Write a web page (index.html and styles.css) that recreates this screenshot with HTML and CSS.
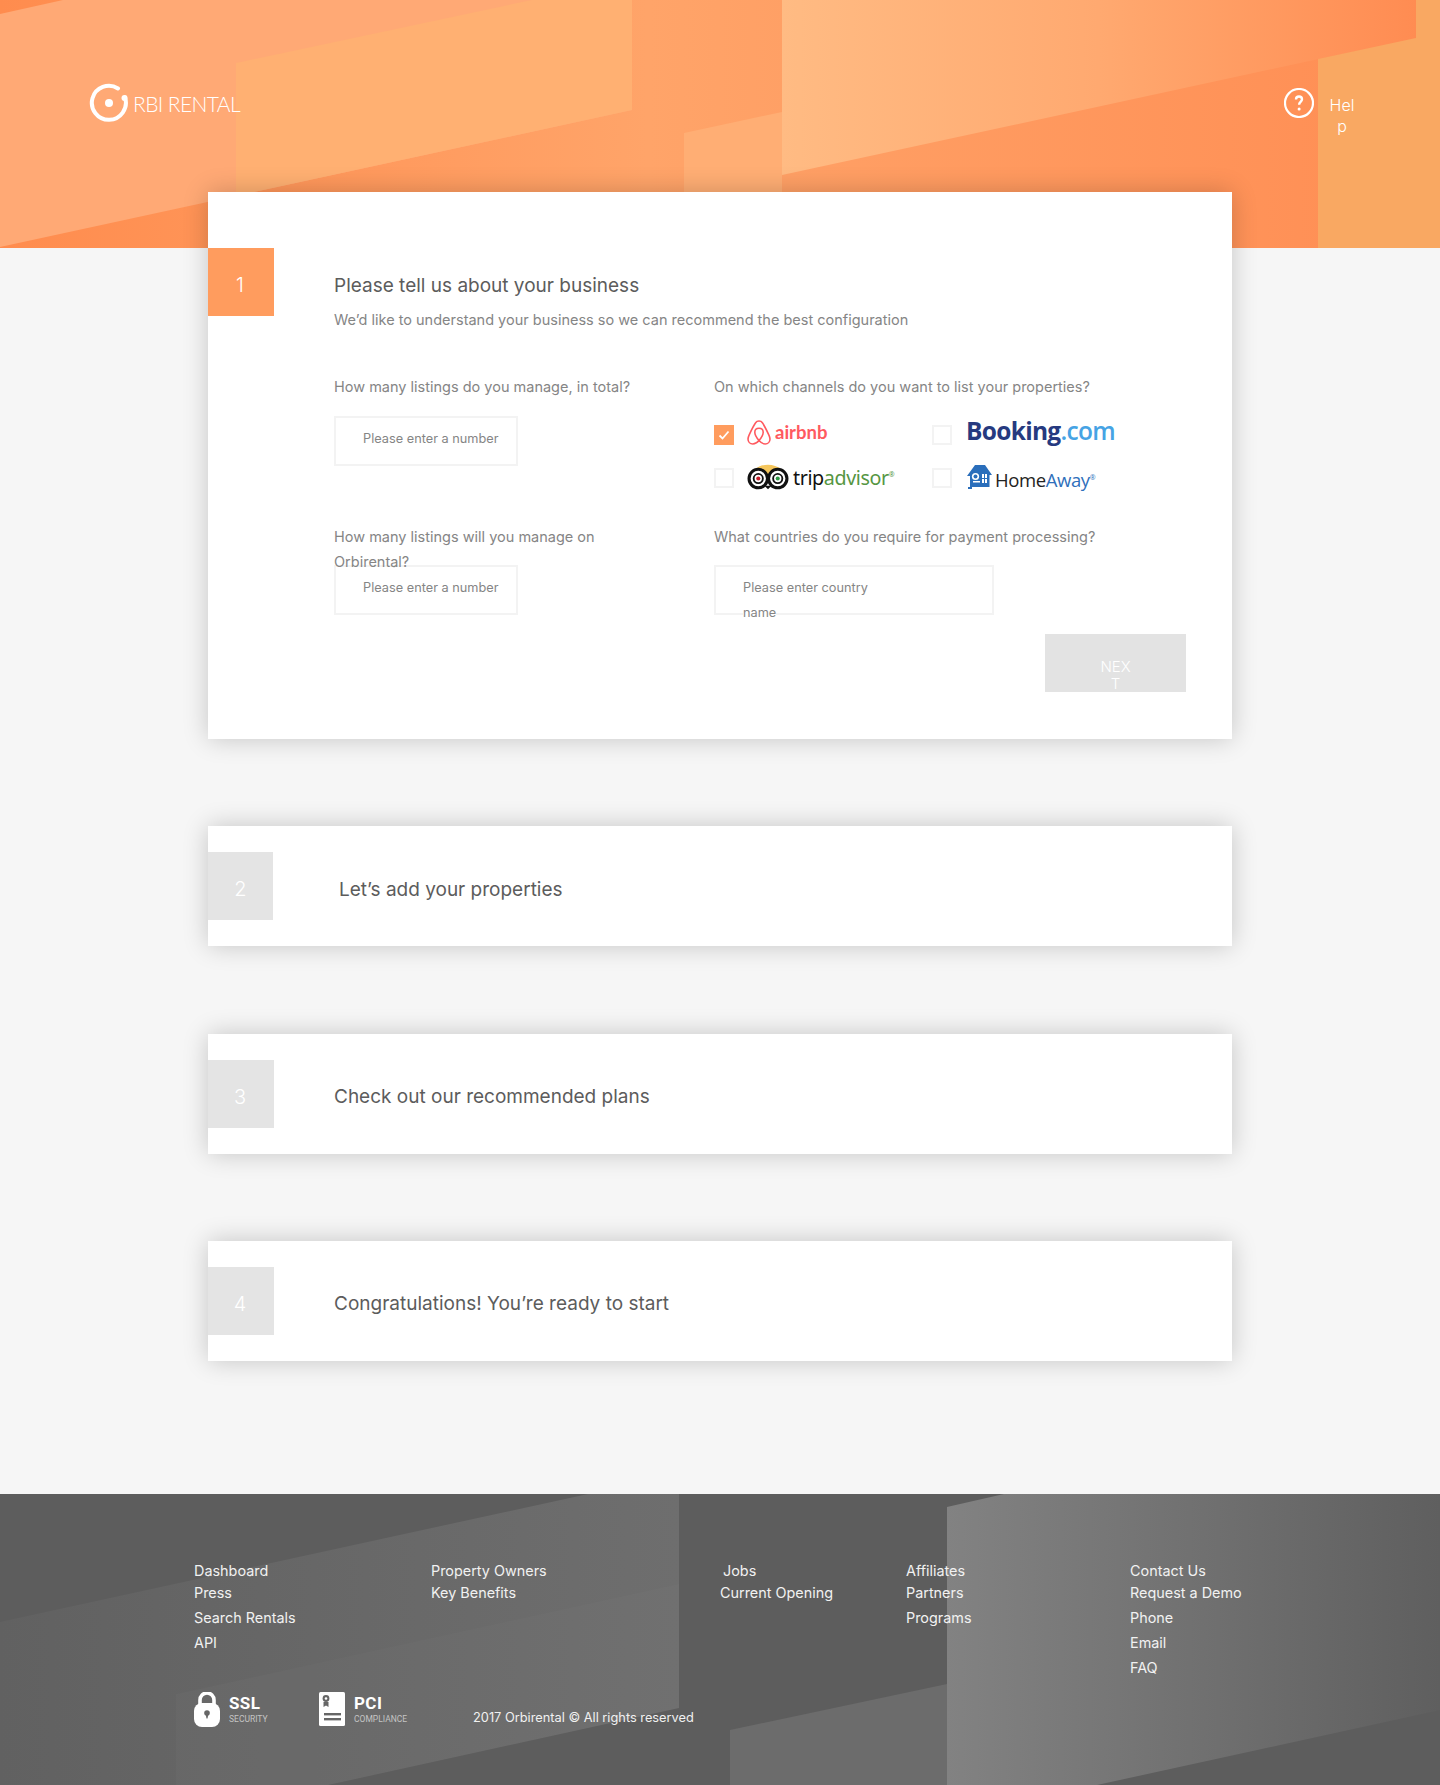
FILE: index.html
```html
<!DOCTYPE html>
<html lang="en">
<head>
    <meta charset="UTF-8">
    <meta name="viewport" content="width=device-width, initial-scale=1.0">
    <title>Orbirental - Get started</title>
    <link rel="stylesheet" href="styles.css">
</head>
<body>
    <header class="top">
        <svg class="top-bg" viewBox="0 0 1440 248" preserveAspectRatio="none" aria-hidden="true">
            <defs>
                <linearGradient id="topBase" x1="0" x2="1" y1="0" y2="0">
                    <stop offset="0" stop-color="#ff8c4e"/>
                    <stop offset=".45" stop-color="#ffa469"/>
                    <stop offset=".95" stop-color="#ff8f55"/>
                </linearGradient>
                <linearGradient id="topBig" x1="0" x2="1" y1="0" y2="0">
                    <stop offset="0" stop-color="#ffbb83"/>
                    <stop offset=".5" stop-color="#ffa970"/>
                    <stop offset="1" stop-color="#ff8c52"/>
                </linearGradient>
            </defs>
            <rect width="1440" height="248" fill="url(#topBase)"/>
            <polygon points="0,14 63,0 632,0 632,110 0,247" fill="#ffa975"/>
            <polygon points="236,63 532,0 632,0 632,110 236,196" fill="#ffb072"/>
            <polygon points="684,133 782,112 782,248 684,248" fill="#ffae74"/>
            <polygon points="782,0 1416,0 1416,38 782,175" fill="url(#topBig)"/>
            <polygon points="1318,59 1416,38 1416,0 1440,0 1440,248 1318,248" fill="#f9a862"/>
        </svg>
        <a class="logo">
            <svg width="40" height="40" viewBox="0 0 40 40" aria-hidden="true">
                <path d="M36 14.500A17 17 0 1 1 29 5.500" fill="none" stroke="#fff" stroke-width="4" stroke-linecap="round"/>
                <circle cx="35.500" cy="15" r="3" fill="#fff"/>
                <circle cx="20" cy="20" r="4" fill="#fff"/>
            </svg>
            <span class="logo-text">RBI RENTAL</span>
        </a>
        <a class="help">
            <svg width="30" height="30" viewBox="0 0 30 30" aria-hidden="true">
                <circle cx="15" cy="15" r="14" fill="none" stroke="#fff" stroke-width="2.200"/>
                <path d="M12 11.500c0-1.900 1.300-3 3-3s3 1.100 3 2.800c0 2.600-2.900 2.700-2.900 5.500" fill="none" stroke="#fff" stroke-width="2.400"/>
                <circle cx="15.100" cy="21" r="1.500" fill="#fff"/>
            </svg>
            <span class="help-text">Help</span>
        </a>
    </header>

    <main class="steps">
        <section class="card card-open">
            <div class="num num-on">1</div>
            <div class="card-body">
                <h2 class="title">Please tell us about your business</h2>
                <p class="sub">We’d like to understand your business so we can recommend the best configuration</p>
                <div class="form-grid">
                    <div class="field">
                        <div class="label">How many listings do you manage, in total?</div>
                        <div class="input input-num">Please enter a number</div>
                    </div>
                    <div class="field">
                        <div class="label">On which channels do you want to list your properties?</div>
                        <div class="channels">
                            <div class="channel">
                                <span class="check check-on">
                                    <svg width="12" height="12" viewBox="0 0 12 12" aria-hidden="true"><path d="M1.500 6.500l3 3 6-7" fill="none" stroke="#fff" stroke-width="1.800"/></svg>
                                </span>
                                <span class="brand airbnb">
                                    <svg width="24" height="25" viewBox="0 0 24 25" aria-hidden="true">
                                        <path d="M12 20.500c-2.200 2.600-4.300 3.500-6.200 3.500C3 24 1 21.700 1 19c0-1.300.5-2.700 1.200-4.200C4 11 6.500 5.800 8.600 2.800 9.400 1.600 10.500 1 12 1s2.600.6 3.400 1.800c2.100 3 4.600 8.200 6.400 12 .7 1.500 1.200 2.900 1.200 4.200 0 2.700-2 5-4.800 5-1.900 0-4-.9-6.200-3.500z" fill="none" stroke="#ff5a5f" stroke-width="1.600"/>
                                        <path d="M12 20.500c-2.600-3-4.200-6-4.200-8.300 0-2.400 1.800-3.900 4.200-3.900s4.200 1.500 4.200 3.900c0 2.300-1.600 5.300-4.200 8.300z" fill="none" stroke="#ff5a5f" stroke-width="1.600"/>
                                    </svg>
                                    airbnb
                                </span>
                            </div>
                            <div class="channel">
                                <span class="check"></span>
                                <span class="brand booking">Booking<b>.com</b></span>
                            </div>
                            <div class="channel">
                                <span class="check"></span>
                                <span class="brand trip">
                                    <svg width="42" height="26" viewBox="0 0 41 25" aria-hidden="true">
                                        <path d="M8 5C14-1 27-1 33 5L20.500 13z" fill="#f5c65c"/>
                                        <circle cx="11" cy="14" r="9" fill="#fff" stroke="#111" stroke-width="3"/>
                                        <circle cx="30" cy="14" r="9" fill="#fff" stroke="#111" stroke-width="3"/>
                                        <circle cx="11" cy="14" r="4.500" fill="#fff" stroke="#111" stroke-width="1.800"/>
                                        <circle cx="30" cy="14" r="4.500" fill="#fff" stroke="#111" stroke-width="1.800"/>
                                        <circle cx="11" cy="14" r="2" fill="#c8202c"/>
                                        <circle cx="30" cy="14" r="2" fill="#2f9a46"/>
                                        <path d="M17 21l3.500 3.500L24 21z" fill="#111"/>
                                    </svg>
                                    <span>trip<i>advisor</i><sup>®</sup></span>
                                </span>
                            </div>
                            <div class="channel">
                                <span class="check"></span>
                                <span class="brand home">
                                    <svg width="26" height="24" viewBox="0 0 26 24" aria-hidden="true">
                                        <path d="M0 11L8 0h10l7 10h-2.500v12H5v2H1v-2h2V11z" fill="#2a6ebb"/>
                                        <circle cx="8.500" cy="11.500" r="3.600" fill="#fff"/>
                                        <circle cx="8.500" cy="11.500" r="2" fill="#2a6ebb"/>
                                        <rect x="6" y="16" width="7" height="1.500" fill="#fff"/>
                                        <path d="M15 9h5v9h-5z" fill="#fff"/>
                                        <path d="M17 9h1v9h-1zM15 13h5v1h-5z" fill="#2a6ebb"/>
                                    </svg>
                                    <span class="home-name">Home<i>Away</i><sup>®</sup></span>
                                </span>
                            </div>
                        </div>
                    </div>
                    <div class="field">
                        <div class="label label-low">How many listings will you manage on Orbirental?</div>
                        <div class="input input-num">Please enter a number</div>
                    </div>
                    <div class="field">
                        <div class="label label-low">What countries do you require for payment processing?</div>
                        <div class="input input-country"><span>Please enter country name</span></div>
                    </div>
                </div>
                <div class="actions">
                    <button class="next" type="button">NEXT</button>
                </div>
            </div>
        </section>

        <section class="card card-two">
            <div class="num num-two">2</div>
            <h2 class="title title-shut title-two">Let’s add your properties</h2>
        </section>
        <section class="card">
            <div class="num">3</div>
            <h2 class="title title-shut">Check out our recommended plans</h2>
        </section>
        <section class="card">
            <div class="num">4</div>
            <h2 class="title title-shut">Congratulations! You’re ready to start</h2>
        </section>
    </main>

    <footer class="foot">
        <svg class="foot-bg" viewBox="0 0 1440 291" preserveAspectRatio="none" aria-hidden="true">
            <defs>
                <linearGradient id="footBig" x1="0" x2="1" y1="0" y2="0">
                    <stop offset="0" stop-color="#828282"/>
                    <stop offset=".55" stop-color="#6f6f6f"/>
                    <stop offset="1" stop-color="#5f5f5f"/>
                </linearGradient>
                <linearGradient id="footLeft" x1="0" x2="1" y1="0" y2="0">
                    <stop offset="0" stop-color="#616161"/>
                    <stop offset="1" stop-color="#6e6e6e"/>
                </linearGradient>
            </defs>
            <rect width="1440" height="291" fill="#5d5d5d"/>
            <polygon points="0,128 588,0 679,0 679,214 328,291 0,291" fill="url(#footLeft)"/>
            <polygon points="176,200 679,90 679,214 328,291 176,291" fill="#fff" fill-opacity=".02"/>
            <polygon points="730,236 947,190 947,291 730,291" fill="#6c6c6c"/>
            <polygon points="947,13 1004,0 1440,0 1440,216 1097,291 947,291" fill="url(#footBig)"/>
        </svg>
        <div class="foot-cols">
            <ul class="foot-col col-a">
                <li>Dashboard</li>
                <li>Press</li>
                <li>Search Rentals</li>
                <li>API</li>
            </ul>
            <ul class="foot-col col-b">
                <li>Property Owners</li>
                <li>Key Benefits</li>
            </ul>
            <ul class="foot-col col-c">
                <li class="shift">Jobs</li>
                <li>Current Opening</li>
            </ul>
            <ul class="foot-col col-d">
                <li>Affiliates</li>
                <li>Partners</li>
                <li>Programs</li>
            </ul>
            <ul class="foot-col col-e">
                <li>Contact Us</li>
                <li>Request a Demo</li>
                <li>Phone</li>
                <li>Email</li>
                <li>FAQ</li>
            </ul>
        </div>
        <div class="foot-bottom">
            <div class="badge badge-ssl">
                <svg width="26" height="35" viewBox="0 0 26 35" aria-hidden="true">
                    <path d="M6 13V8a7 7 0 0 1 14 0v5" fill="none" stroke="#fff" stroke-width="3.600"/>
                    <rect y="11" width="26" height="24" rx="8" fill="#fff"/>
                    <circle cx="13" cy="21" r="2.800" fill="#666"/>
                    <path d="M11.500 22h3l-1 4.500h-1z" fill="#666"/>
                </svg>
                <div class="badge-text"><strong>SSL</strong><span>SECURITY</span></div>
            </div>
            <div class="badge badge-pci">
                <svg width="26" height="34" viewBox="0 0 26 34" aria-hidden="true">
                    <rect width="26" height="34" rx="1.500" fill="#fff"/>
                    <circle cx="7" cy="6.500" r="3.400" fill="#666"/>
                    <circle cx="7" cy="6.500" r="1.300" fill="#fff"/>
                    <path d="M4.500 10h5v5l-2.500-1.600L4.500 15z" fill="#666"/>
                    <rect x="5" y="21" width="17" height="2.400" fill="#666"/>
                    <rect x="5" y="26" width="17" height="2.400" fill="#666"/>
                </svg>
                <div class="badge-text"><strong>PCI</strong><span>COMPLIANCE</span></div>
            </div>
            <p class="copy">2017 Orbirental © All rights reserved</p>
        </div>
    </footer>
</body>
</html>
```

FILE: styles.css
```css
*{
    margin: 0;
    padding: 0;
    box-sizing: border-box;
}

body{
    background-color: #f6f6f6;
    font-family: Inter, "Liberation Sans", sans-serif;
    color: #5c5c5c;
}

/* header */
.top{
    position: relative;
    height: 248px;
    display: flex;
    justify-content: space-between;
    align-items: flex-start;
    padding: 83px 83px 0 90px;
}
.top-bg, .foot-bg{
    position: absolute;
    left: 0;
    top: 0;
    width: 100%;
    height: 100%;
}
.logo{
    position: relative;
    display: flex;
    align-items: center;
    gap: 4px;
    color: #fff;
}
.logo svg{
    margin-left: -1px;
}
.logo-text{
    font-family: Lato, sans-serif;
    font-weight: 300;
    font-size: 21px;
    letter-spacing: -.6px;
}
.help{
    position: relative;
    display: flex;
    align-items: flex-start;
    gap: 13px;
    margin-top: 5px;
    color: #fff;
}
.help-text{
    width: 30px;
    margin-top: 7px;
    font-size: 16px;
    line-height: 21px;
    text-align: center;
    word-break: break-all;
    font-weight: 300;
}

/* step cards */
.steps{
    width: 1024px;
    margin: -56px auto 0;
    position: relative;
}
.card{
    display: flex;
    align-items: flex-start;
    height: 120px;
    margin-bottom: 87px;
    padding-top: 26px;
    background-color: #fff;
    box-shadow: 0 0 24px rgba(0, 0, 0, .2);
}
.card-open{
    height: 547px;
    padding-top: 56px;
}
.card-two{
    margin-bottom: 88px;
}
.num{
    flex: none;
    width: 66px;
    height: 68px;
    padding: 24px 2px 0 0;
    background-color: #e4e4e4;
    color: #fff;
    font-size: 20px;
    font-weight: 300;
    line-height: 26px;
    text-align: center;
}
.num-on{
    background-color: #ff9c5e;
}
.num-two{
    width: 65px;
    padding-right: 0;
}
.card-body{
    flex: 1;
    padding: 25px 46px 0 60px;
}
.title{
    font-size: 19px;
    font-weight: 400;
    line-height: 25px;
    color: #5c5c5c;
}
.title-shut{
    margin: 24px 0 0 60px;
}
.title-two{
    margin: 25px 0 0 66px;
}
.sub{
    margin-top: 9px;
    font-size: 14.500px;
    line-height: 25px;
    color: #858585;
}

/* form */
.form-grid{
    display: grid;
    grid-template-columns: 380px 1fr;
    grid-template-rows: 150px auto;
    margin-top: 42px;
}
.label{
    height: 25px;
    margin-bottom: 17px;
    max-width: 310px;
    font-size: 14.500px;
    line-height: 25px;
    color: #858585;
}
.field:nth-child(even) .label{
    max-width: none;
}
.label-low{
    margin-bottom: 16px;
}
.input{
    height: 50px;
    padding: 8px 0 0 27px;
    border: 2px solid #f3f3f3;
    font-size: 12.750px;
    line-height: 25px;
    color: #858585;
}
.input-num{
    width: 184px;
}
.input-country{
    width: 280px;
    padding-right: 100px;
}
.input-country span{
    background-color: #fff;
}

/* channels */
.channels{
    display: grid;
    grid-template-columns: 218px 1fr;
    grid-auto-rows: 20px;
    row-gap: 23px;
    margin-top: 26px;
}
.channel{
    display: flex;
    align-items: center;
    gap: 13px;
}
.check{
    flex: none;
    width: 20px;
    height: 20px;
    border: 2px solid #f3f3f3;
}
.check-on{
    display: flex;
    align-items: center;
    justify-content: center;
    border: 0;
    background-color: #ff9c5e;
}
.brand{
    display: flex;
    align-items: center;
    white-space: nowrap;
}
.airbnb{
    gap: 4px;
    margin-top: -6px;
    font-family: Lato, sans-serif;
    font-weight: 700;
    font-size: 18.500px;
    color: #ff5a5f;
}
.booking{
    margin: -10px 0 0 1px;
    font-family: "Open Sans", sans-serif;
    font-weight: 700;
    font-size: 24.500px;
    letter-spacing: -.7px;
    color: #263a80;
}
.booking b{
    font-weight: 600;
    color: #46a3e4;
}
.trip{
    gap: 4px;
    margin-top: -2px;
    font-family: "Noto Sans", sans-serif;
    font-size: 19.700px;
    letter-spacing: -.4px;
    color: #111;
}
.trip i{
    font-style: normal;
    color: #569643;
}
.trip sup, .home sup{
    font-size: 7px;
    color: #569643;
}
.home{
    gap: 2px;
    margin: -2px 0 0 2px;
    font-family: "Open Sans", sans-serif;
    font-size: 18.500px;
    letter-spacing: -.4px;
    color: #222;
}
.home-name{
    margin-top: 4px;
}
.home i{
    font-style: normal;
    color: #2f6fbb;
}
.home sup{
    color: #2f6fbb;
}

.actions{
    display: flex;
    justify-content: flex-end;
    margin-top: 19px;
}
.next{
    width: 141px;
    height: 58px;
    padding: 24px 52px 0;
    border: 0;
    background-color: #e3e3e3;
    color: #fff;
    font-family: inherit;
    font-size: 15px;
    font-weight: 300;
    line-height: 17px;
    word-break: break-all;
    display: block;
    text-align: center;
}

/* footer */
.foot{
    position: relative;
    height: 291px;
    margin-top: 133px;
    padding: 64px 0 0 194px;
    color: #f1f1f1;
    font-size: 14.400px;
}
.steps .card:last-child{
    margin-bottom: 0;
}
.foot-cols{
    position: relative;
    display: flex;
}
.foot-col{
    list-style: none;
    line-height: 25px;
}
.foot-col li:first-child{
    margin-bottom: -3px;
}
.col-a{ width: 237px; }
.col-b{ width: 289px; }
.col-c{ width: 186px; }
.col-d{ width: 224px; }
.shift{
    margin-left: 3px;
}
.foot-bottom{
    position: absolute;
    left: 194px;
    top: 198px;
    display: flex;
    align-items: flex-start;
}
.badge{
    display: flex;
    gap: 9px;
}
.badge-ssl{
    width: 125px;
}
.badge-pci{
    width: 154px;
}
.badge-text{
    display: flex;
    flex-direction: column;
    padding-top: 1px;
    font-family: Roboto, sans-serif;
}
.badge-text strong{
    font-size: 17px;
    line-height: 20px;
    letter-spacing: .4px;
    color: #fff;
}
.badge-text span{
    font-size: 8.500px;
    line-height: 12px;
    color: #c4c4c4;
}
.copy{
    margin-top: 16px;
    font-size: 12.800px;
    line-height: 20px;
}
```
